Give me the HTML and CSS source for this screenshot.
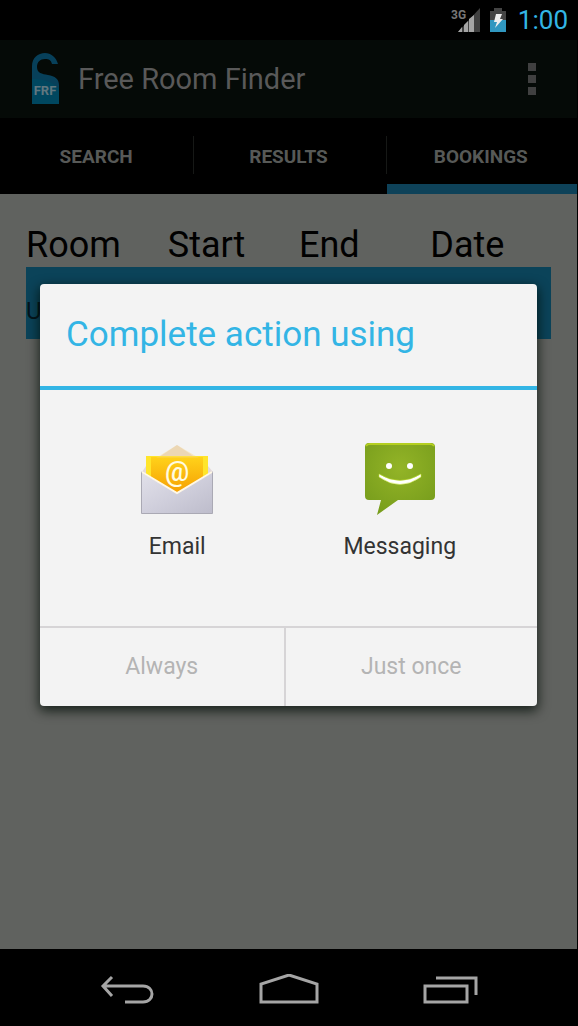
FILE: index.html
```html
<!DOCTYPE html>
<html lang="en">
<head>
<meta charset="utf-8">
<meta name="viewport" content="width=device-width, initial-scale=1">
<title>Free Room Finder</title>
<link rel="stylesheet" href="styles.css">
</head>
<body>
<div class="screen">
  <div class="status-bar">
    <svg class="signal" width="30" height="28" viewBox="0 0 30 28" role="img" aria-label="3G signal">
      <text class="signal-label" x="0" y="13">3G</text>
      <path fill="#414141" d="M29 2v24H7z"/>
      <path fill="#a5a5a5" d="M11 21v5H7zM17 15v11h-4v-7zM23 9v17h-5V13z"/>
    </svg>
    <svg class="battery" width="16" height="26" viewBox="0 0 16 26" role="img" aria-label="Charging">
      <path fill="#444" d="M4 1h8v3h4v21H0V4h4z"/>
      <path fill="#3097c0" d="M0 13h16v12H0z"/>
      <path fill="#eee" d="M6 7h6l-2 5h3L5 21l2-6H4z"/>
    </svg>
    <time class="clock">1:00</time>
  </div>

  <div class="window">
    <header class="app-bar">
      <svg class="logo" width="28" height="52" viewBox="0 0 28 52" aria-hidden="true">
        <path fill="#07405a" d="M0 51V13C0 5 6 0 13 0c6 0 11 4 13 11h-6c-1-4-3-5-7-5-5 0-8 3-8 8 0 6 5 7 11 8 7 1 11 4 11 10v19z"/>
        <path fill="#00475f" d="M0 26c10 0 20 2 27 10v15H0z"/>
        <text class="logo-label" x="13" y="42">FRF</text>
      </svg>
      <h1 class="app-title">Free Room Finder</h1>
      <button class="overflow" type="button" aria-label="More options">
        <svg width="9" height="33" viewBox="0 0 9 33"><path fill="#404040" d="M0 0h8v8H0zM0 12h8v8H0zM0 24h8v8H0z"/></svg>
      </button>
    </header>
    <nav class="tabs">
      <button class="tab" type="button">SEARCH</button>
      <button class="tab" type="button">RESULTS</button>
      <button class="tab tab-active" type="button">BOOKINGS</button>
    </nav>
    <main class="content">
      <table class="bookings">
        <colgroup><col class="col-room"><col class="col-time"><col class="col-time"><col></colgroup>
        <thead>
          <tr><th>Room</th><th>Start</th><th>End</th><th>Date</th></tr>
        </thead>
        <tbody>
          <tr><td>U</td><td></td><td></td><td></td></tr>
        </tbody>
      </table>
    </main>

    <div class="overlay">
      <section class="dialog" role="dialog" aria-labelledby="dialog-title">
        <h2 class="dialog-title" id="dialog-title">Complete action using</h2>
        <div class="choices">
          <button class="choice" type="button">
            <svg width="74" height="74" viewBox="0 0 74 74" aria-hidden="true">
              <defs>
                <linearGradient id="paper" x1="0" y1="0" x2="0" y2="1"><stop offset="0" stop-color="#ffd21a"/><stop offset="1" stop-color="#f59a00"/></linearGradient>
                <linearGradient id="envelope" x1="0" y1="0" x2="1" y2="1"><stop offset="0" stop-color="#e2e1ea"/><stop offset=".5" stop-color="#d0cfdc"/><stop offset="1" stop-color="#bdbccb"/></linearGradient>
              </defs>
              <path fill="#e3d9da" d="M37 3 68 24l5 6v10H2V30l4-6z"/>
              <path fill="#ffe52b" d="M6 14h62v34H6z"/>
              <path fill="url(#paper)" d="M11 15h52v34L37 55 11 50z"/>
              <path fill="#fbd56c" d="M16 16 37 3l22 13z" opacity=".35"/>
              <text class="at-sign" x="37" y="39">@</text>
              <path fill="url(#envelope)" stroke="#aaa9b4" d="M1.500 30 37 51 72.500 30v41.500h-71z"/>
              <path fill="none" stroke="#fff8e6" stroke-width="2" d="M2 30 37 51 72 30"/>
            </svg>
            <span>Email</span>
          </button>
          <button class="choice" type="button">
            <svg width="74" height="74" viewBox="0 0 74 74" aria-hidden="true">
              <defs><radialGradient id="bubble" cx=".5" cy=".35" r=".75"><stop offset="0" stop-color="#93b427"/><stop offset="1" stop-color="#759b1b"/></radialGradient></defs>
              <path fill="url(#bubble)" d="M6 1h62q4 0 4 4v49q0 4-4 4H35L14 73l4-15H6q-4 0-4-4V5q0-4 4-4z"/>
              <path fill="none" stroke="#b4cf20" stroke-width="2" d="M3 4q1-2 4-2h60q3 0 4 2"/>
              <circle cx="26" cy="24" r="3" fill="#fff"/><circle cx="47" cy="24" r="3" fill="#fff"/>
              <path fill="#fff" stroke="#c7e52c" stroke-width=".5" d="M16 32q21 13 42 0v3q-21 15-42 0z"/>
            </svg>
            <span>Messaging</span>
          </button>
        </div>
        <div class="actions">
          <button class="action action-always" type="button" disabled>Always</button>
          <button class="action" type="button" disabled>Just once</button>
        </div>
      </section>
    </div>
  </div>

  <nav class="nav-bar">
    <button class="nav-button" type="button" aria-label="Back">
      <svg width="56" height="32" viewBox="0 0 56 32"><path d="M13 3 4 12l9 10M4 12h40c12 0 12 16 0 16H26"/></svg>
    </button>
    <button class="nav-button" type="button" aria-label="Home">
      <svg width="60" height="32" viewBox="0 0 60 32"><path d="M2 28V10L30 1l28 9v18z"/></svg>
    </button>
    <button class="nav-button" type="button" aria-label="Recent apps">
      <svg width="56" height="32" viewBox="0 0 56 32"><path d="M2 12h42v16H2zM13 4h40v17"/></svg>
    </button>
  </nav>
</div>
</body>
</html>
```

FILE: styles.css
```css
* {
  box-sizing: border-box;
}

body {
  margin: 0;
  background: #000;
  font-family: Roboto, "Noto Sans", sans-serif;
}

button {
  margin: 0;
  padding: 0;
  border: 0;
  background: none;
  font: inherit;
  color: inherit;
}

svg {
  display: block;
}

.screen {
  display: flex;
  flex-direction: column;
  min-height: 100vh;
}

.status-bar {
  display: flex;
  align-items: center;
  justify-content: flex-end;
  height: 40px;
  padding-right: 10px;
}

.signal-label {
  font-size: 12px;
  font-weight: 700;
  fill: #777;
}

.battery {
  margin: 0 12px 0 9px;
}

.clock {
  font-size: 26px;
  line-height: 40px;
  color: #33b5e5;
}

.window {
  position: relative;
  display: flex;
  flex: 1;
  flex-direction: column;
  margin-right: 1px;
}

.app-bar {
  display: flex;
  align-items: center;
  height: 78px;
  padding: 0 40px 0 32px;
  background: #050a07;
}

.logo-label {
  font-size: 13px;
  font-weight: 700;
  text-anchor: middle;
  fill: #60777f;
}

.app-title {
  flex: 1;
  margin: 0 0 0 18px;
  font-size: 29px;
  font-weight: 400;
  color: #595959;
}

.tabs {
  display: flex;
  height: 76px;
}

.tab {
  position: relative;
  flex: 1;
  font-size: 19px;
  font-weight: 700;
  color: #575957;
}

.tab + .tab::before {
  content: "";
  position: absolute;
  top: 18px;
  bottom: 20px;
  left: 1px;
  width: 1px;
  background: #161816;
}

.tab-active::after {
  content: "";
  position: absolute;
  right: 0;
  bottom: 0;
  left: 2px;
  height: 10px;
  background: #0e4259;
}

.content {
  flex: 1;
  padding: 29px 26px 0;
  background: #60625f;
}

.bookings {
  width: 100%;
  border-collapse: collapse;
  table-layout: fixed;
}

.bookings th {
  height: 44px;
  padding: 0;
  font-size: 36px;
  font-weight: 400;
  line-height: 44px;
  text-align: left;
  color: #000;
}

.col-room {
  width: 27%;
}

.col-time {
  width: 25%;
}

.bookings td {
  height: 72px;
  padding: 16px 0 0;
  font-size: 24px;
  color: #04141b;
}

.bookings tbody tr {
  background: #0b4359;
}

.overlay {
  position: absolute;
  inset: 0;
  display: flex;
  align-items: center;
  justify-content: center;
  padding: 0 40px;
}

.dialog {
  width: 100%;
  border-radius: 4px;
  overflow: hidden;
  background: #f3f3f3;
  box-shadow: 0 4px 12px 1px rgba(0, 12, 6, 0.75);
}

.dialog-title {
  margin: 0;
  padding: 0 26px;
  border-bottom: 4px solid #33b5e5;
  font-size: 35px;
  font-weight: 400;
  line-height: 102px;
  color: #33b5e5;
}

.choices {
  display: flex;
  padding: 52px 26px 64px;
}

.choice {
  display: flex;
  flex: 1;
  flex-direction: column;
  align-items: center;
  gap: 16px;
  font-size: 23px;
  line-height: 30px;
  color: #333;
}

.at-sign {
  font-size: 27px;
  font-weight: 500;
  text-anchor: middle;
  fill: #fffbe2;
}

.actions {
  display: flex;
  border-top: 2px solid #d6d4d6;
}

.action {
  flex: 1;
  height: 78px;
  font-size: 23px;
  color: #b4b4b4;
}

.action-always {
  flex: 0 0 49%;
}

.action + .action {
  border-left: 2px solid #d6d4d6;
}

.nav-bar {
  display: flex;
  align-items: center;
  justify-content: center;
  gap: 104px;
  height: 77px;
  padding-top: 4px;
}

.nav-button path {
  fill: none;
  stroke: #a5a5a5;
  stroke-width: 3;
}
```
